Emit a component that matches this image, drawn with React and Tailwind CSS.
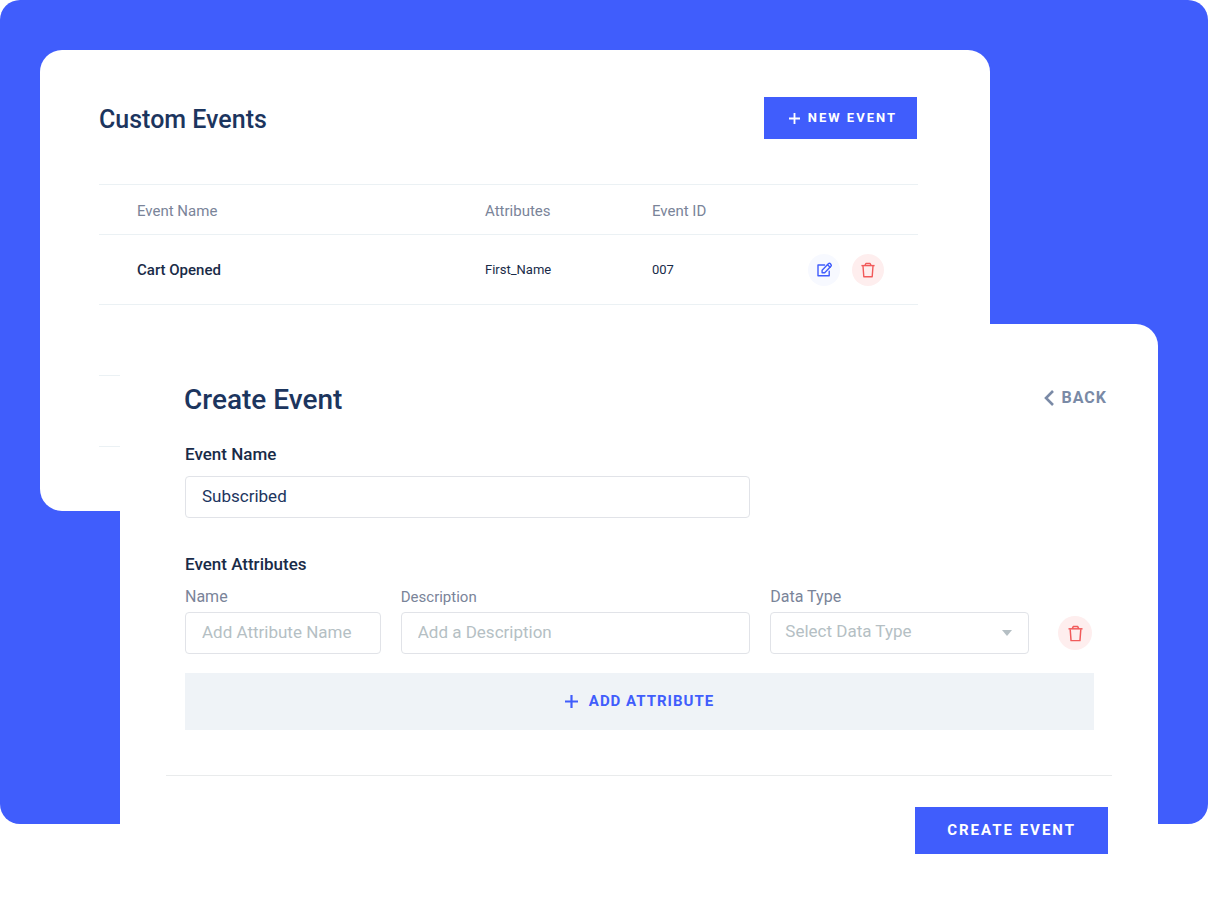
import React from "react";

function TrashIcon({ className }) {
  return (
    <svg viewBox="0 0 16 16" className={className} fill="none" stroke="currentColor" aria-hidden="true">
      <path d="M1.4 3.6h13.2" strokeWidth="1.4" />
      <path d="M5 3.4 5.9 1.5h4.2L11 3.4" strokeWidth="1.4" strokeLinejoin="round" />
      <path d="M3 4l.8 10.7h8.4L13 4" strokeWidth="1.4" strokeLinejoin="round" />
    </svg>
  );
}

function EditIcon({ className }) {
  return (
    <svg
      viewBox="0 0 16 16"
      className={className}
      fill="none"
      stroke="currentColor"
      strokeWidth="1.4"
      strokeLinecap="round"
      strokeLinejoin="round"
      aria-hidden="true"
    >
      <path d="M8.600 3H2v10.800h11.200V9.200" />
      <path d="M6.100 10.800V8.200l6.500-6.600c.5-.5 1.200-.5 1.700 0l.6.900c.5.500.5 1.200 0 1.700l-6.200 6.600z" />
      <path d="M11.500 2.700l2.600 2.600" />
    </svg>
  );
}

function PlusIcon({ className }) {
  return (
    <svg viewBox="0 0 12 12" className={className} fill="none" stroke="currentColor" strokeWidth="2" aria-hidden="true">
      <path d="M6 0v12M0 6h12" />
    </svg>
  );
}

const events = [{ name: "Cart Opened", attributes: "First_Name", id: "007" }];

const field =
  "h-[42px] w-full rounded-[4px] border border-[#e1e3e8] bg-white px-4 pb-[3px] text-[17px] text-[#1c355e] outline-none placeholder:text-[#b5bfc4] placeholder:opacity-100";

function CustomEvents() {
  return (
    <section className="ml-10 mr-[218px] rounded-[22px] bg-white pb-16 pl-[59px] pr-[72px] pt-[47px]">
      <header className="flex h-[42px] items-center justify-between pr-px">
        <h1 className="pt-1 text-[25px] font-medium leading-8 text-[#1c355e]">Custom Events</h1>
        <button
          type="button"
          className="flex h-[42px] items-center gap-2 bg-[#405dfc] pl-[25px] pr-5 text-[13px] font-bold tracking-[2px] text-white"
        >
          <PlusIcon className="size-[11px]" />
          NEW EVENT
        </button>
      </header>

      <table className="mt-[45px] w-full table-fixed border-collapse text-left">
        <colgroup>
          <col />
          <col className="w-[167px]" />
          <col className="w-[156px]" />
          <col className="w-[110px]" />
        </colgroup>
        <thead>
          <tr className="h-[50px] border-y border-[#ebf1f4] text-[15px] text-[#7a8499]">
            <th scope="col" className="pl-[38px] pt-1 font-normal">Event Name</th>
            <th scope="col" className="pt-1 font-normal">Attributes</th>
            <th scope="col" className="pt-1 font-normal">Event ID</th>
            <td />
          </tr>
        </thead>
        <tbody>
          {events.map((event) => (
            <tr key={event.id} className="h-[70px] border-b border-[#ebf1f4] text-[13px] text-[#192b48]">
              <td className="pl-[38px] pt-0.5 text-[15px] font-medium">{event.name}</td>
              <td>{event.attributes}</td>
              <td>{event.id}</td>
              <td>
                <div className="flex gap-3">
                  <button
                    type="button"
                    aria-label="Edit event"
                    className="flex size-8 items-center justify-center rounded-full bg-[#f7f9ff] text-[#405dfc]"
                  >
                    <EditIcon className="size-4" />
                  </button>
                  <button
                    type="button"
                    aria-label="Delete event"
                    className="flex size-8 items-center justify-center rounded-full bg-[#feeeee] text-[#f15a5a]"
                  >
                    <TrashIcon className="size-4" />
                  </button>
                </div>
              </td>
            </tr>
          ))}
          <tr className="h-[71px] border-b border-[#ebf1f4]">
            <td colSpan={4} />
          </tr>
          <tr className="h-[71px] border-b border-[#ebf1f4]">
            <td colSpan={4} />
          </tr>
        </tbody>
      </table>
    </section>
  );
}

function CreateEvent() {
  return (
    <section className="relative -mt-[187px] ml-[120px] mr-[50px] rounded-tr-[22px] bg-white px-[46px] pb-12 pt-[58px]">
      <form onSubmit={(e) => e.preventDefault()}>
        <header className="flex items-start justify-between pl-[18px] pr-[5px]">
          <h2 className="text-[28px] font-medium leading-9 text-[#1c355e]">Create Event</h2>
          <button type="button" className="flex h-8 items-center gap-2 text-base font-bold tracking-[1px] text-[#7a8aa6]">
            <svg viewBox="0 0 10 16" className="h-4 w-[10px]" fill="none" stroke="currentColor" strokeWidth="2.6" aria-hidden="true">
              <path d="M9 1 2 8l7 7" />
            </svg>
            BACK
          </button>
        </header>

        <div className="grid grid-cols-[196fr_350fr_259fr_45px] gap-x-5 pl-[19px] pr-[18px]">
          <label htmlFor="event-name" className="col-span-4 mt-6 text-[17px] font-medium leading-6 text-[#192b48]">
            Event Name
          </label>
          <div className="col-span-2 mt-[10px]">
            <input id="event-name" type="text" defaultValue="Subscribed" className={field} />
          </div>

          <h3 className="col-span-4 mt-[34px] text-[17px] font-medium leading-6 text-[#192b48]">Event Attributes</h3>

          <label htmlFor="attribute-name" className="mt-[9px] text-base leading-6 text-[#7a8499]">Name</label>
          <label htmlFor="attribute-description" className="mt-[9px] text-[15px] leading-6 text-[#7a8499]">Description</label>
          <label htmlFor="attribute-type" className="col-span-2 mt-[9px] text-base leading-6 text-[#7a8499]">Data Type</label>

          <div className="mt-[3px]">
            <input id="attribute-name" type="text" placeholder="Add Attribute Name" className={field} />
          </div>
          <div className="mt-[3px]">
            <input id="attribute-description" type="text" placeholder="Add a Description" className={field} />
          </div>
          <div className="relative mt-[3px]">
            <select
              id="attribute-type"
              defaultValue=""
              className="h-[42px] w-full appearance-none rounded-[4px] border border-[#e1e3e8] bg-white pb-[3px] pl-[14px] pr-10 text-[17px] text-[#b5bfc4] outline-none"
            >
              <option value="">Select Data Type</option>
            </select>
            <svg
              viewBox="0 0 10 6"
              className="pointer-events-none absolute right-[17px] top-[18px] h-[6px] w-[10px] text-[#b5bfc4]"
              fill="currentColor"
              aria-hidden="true"
            >
              <path d="M0 0h10L5 6z" />
            </svg>
          </div>
          <div className="mt-[3px] flex items-center justify-end pr-0.5">
            <button
              type="button"
              aria-label="Delete attribute"
              className="flex size-[34px] items-center justify-center rounded-full bg-[#feeeee] text-[#f15a5a]"
            >
              <TrashIcon className="size-[17px]" />
            </button>
          </div>

          <button
            type="button"
            className="col-span-4 mt-[19px] flex h-[57px] items-center justify-center gap-[11px] bg-[#eff3f7] text-[15px] font-bold tracking-[1px] text-[#405dfc]"
          >
            <PlusIcon className="size-[13px]" />
            ADD ATTRIBUTE
          </button>
        </div>

        <footer className="mt-[45px] flex justify-end border-t border-[#e9ebec] pr-1 pt-[31px]">
          <button
            type="submit"
            className="h-[47px] bg-[#405dfc] px-8 text-[15px] font-bold tracking-[2px] text-white"
          >
            CREATE EVENT
          </button>
        </footer>
      </form>
    </section>
  );
}

export default function App() {
  return (
    <main className="grid bg-white font-[Roboto,sans-serif]">
      <div className="col-start-1 row-start-1 mb-[78px] rounded-[20px] bg-[#405dfc]" />
      <div className="relative col-start-1 row-start-1 pt-[50px]">
        <CustomEvents />
        <CreateEvent />
      </div>
    </main>
  );
}
